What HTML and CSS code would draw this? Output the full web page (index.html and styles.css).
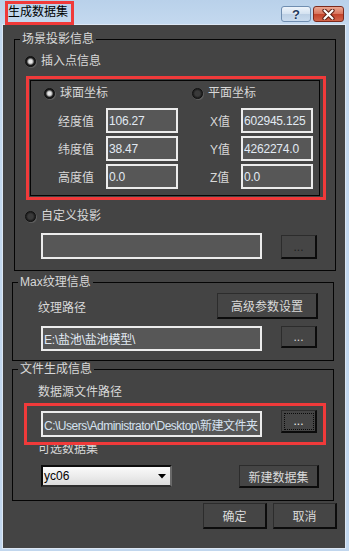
FILE: index.html
```html
<!DOCTYPE html>
<html lang="zh-CN">
<head>
    <meta charset="UTF-8">
    <title>生成数据集</title>
    <link rel="stylesheet" href="styles.css">
</head>
<body>
    <div class="window">
        <div class="titlebar">
            <span class="title">生成数据集</span>
            <span class="cap-btn help">?</span>
            <span class="cap-btn close">
                <svg width="15" height="11" viewBox="0 0 15 11">
                    <path d="M3.5 1.5 L11.5 9.5 M11.5 1.5 L3.5 9.5" stroke="#5b1d12" stroke-width="4.2" stroke-linecap="round"/>
                    <path d="M3.5 1.5 L11.5 9.5 M11.5 1.5 L3.5 9.5" stroke="#fff" stroke-width="2.2" stroke-linecap="round"/>
                </svg>
            </span>
            <div class="mark mark-title"></div>
        </div>

        <div class="client">
            <fieldset class="group g-scene">
                <legend>场景投影信息</legend>
                <div class="radio-row r-insert"><span class="radio on"></span>插入点信息</div>

                <div class="inner">
                    <div class="inner-radios">
                        <div class="radio-row"><span class="radio on"></span>球面坐标</div>
                        <div class="radio-row"><span class="radio"></span>平面坐标</div>
                    </div>
                    <div class="coords">
                        <span class="lbl">经度值</span>
                        <input class="field" type="text" value="106.27">
                        <span></span>
                        <span class="lbl">X值</span>
                        <input class="field" type="text" value="602945.125">

                        <span class="lbl">纬度值</span>
                        <input class="field" type="text" value="38.47">
                        <span></span>
                        <span class="lbl">Y值</span>
                        <input class="field" type="text" value="4262274.0">

                        <span class="lbl">高度值</span>
                        <input class="field" type="text" value="0.0">
                        <span></span>
                        <span class="lbl">Z值</span>
                        <input class="field" type="text" value="0.0">
                    </div>
                    <div class="mark mark-inner"></div>
                </div>

                <div class="radio-row r-custom"><span class="radio"></span>自定义投影</div>
                <div class="path-row p-proj">
                    <input class="field wide" type="text" value="">
                    <button class="btn dots off">...</button>
                </div>
            </fieldset>

            <fieldset class="group g-tex">
                <legend>Max纹理信息</legend>
                <div class="tex-row">
                    <span>纹理路径</span>
                    <button class="btn adv">高级参数设置</button>
                </div>
                <div class="path-row p-tex">
                    <input class="field wide short" type="text" value="E:\盐池\盐池模型\">
                    <button class="btn dots">...</button>
                </div>
            </fieldset>

            <fieldset class="group g-file">
                <legend>文件生成信息</legend>
                <div class="sub-lbl l-src">数据源文件路径</div>
                <div class="path-row p-file">
                    <input class="field wide path" type="text" value="C:\Users\Administrator\Desktop\新建文件夹">
                    <button class="btn dots focus">...</button>
                    <div class="mark mark-file"></div>
                </div>
                <div class="sub-lbl l-opt">可选数据集</div>
                <div class="ds-row">
                    <div class="combo">
                        <span>yc06</span>
                        <svg width="8" height="5" viewBox="0 0 8 5"><path d="M0 0 H8 L4 4.5 Z" fill="#000"/></svg>
                    </div>
                    <button class="btn new-ds">新建数据集</button>
                </div>
            </fieldset>

            <div class="footer">
                <button class="btn ok">确定</button>
                <button class="btn ok">取消</button>
            </div>
        </div>
    </div>
</body>
</html>
```

FILE: styles.css
```css
*{
    box-sizing: border-box;
}
body{
    margin: 0;
    font-family: "Liberation Sans", "Noto Sans CJK SC", sans-serif;
    font-size: 12px;
    background: #c0d6ee;
}
.window{
    width: 349px;
    height: 551px;
    display: flex;
    flex-direction: column;
    padding: 0 4px 3px 3px;
    background: linear-gradient(#b9d1ea, #c4d9ef 25px, #c2d7ee);
}

/* title bar */
.titlebar{
    position: relative;
    height: 25px;
    display: flex;
    align-items: flex-start;
    padding-left: 5px;
}
.title{
    color: #000;
    line-height: 16px;
    margin-top: 4px;
}
.cap-btn{
    height: 16px;
    margin-top: 6px;
    border-radius: 3px;
    display: flex;
    align-items: center;
    justify-content: center;
}
.help{
    width: 30px;
    margin-left: auto;
    border: 1px solid #6f8db0;
    background: linear-gradient(#eef4fb, #d3e1f0 50%, #bccfe4 51%, #c9dbee);
    color: #1f3a5c;
    font-weight: bold;
    font-size: 13px;
    text-shadow: 0 0 2px #fff;
}
.close{
    width: 31px;
    margin-left: 2px;
    margin-right: 1px;
    border: 1px solid #7c2a1d;
    background: linear-gradient(#eba791, #d8735c 50%, #c2422a 51%, #d2654b);
}

/* red markers drawn over the dialog */
.mark{
    position: absolute;
    border: 3px solid #f03a3a;
    pointer-events: none;
}
.mark-title{
    left: 2px;
    top: 1px;
    width: 69px;
    height: 24px;
}
.mark-inner{
    left: -5px;
    top: -5px;
    right: -7px;
    bottom: -5px;
}
.mark-file{
    left: -17px;
    top: -7px;
    width: 302px;
    height: 42px;
}

/* client area */
.client{
    flex: 1;
    background: #444444;
    padding: 6px 0 0 9px;
    color: #d8d8d8;
    box-shadow: 0 0 0 1px #dde8f5;
}
.group{
    margin: 0;
    padding: 0;
    min-width: 0;
    width: 322px;
    border: 1px solid #050505;
}
.group legend{
    margin-left: 5px;
    padding: 0 2px;
    line-height: 16px;
    color: #d8d8d8;
}
.g-scene{
    margin-left: 2px;
}
.g-tex{
    margin-top: 3px;
}

.radio-row{
    display: flex;
    align-items: center;
    gap: 5px;
    height: 16px;
    line-height: 16px;
}
.radio{
    width: 11px;
    height: 11px;
    border-radius: 50%;
    border: 1px solid #101010;
    background: radial-gradient(circle, #3a3a3a 0 2.5px, #232323 4px);
    box-shadow: 1px 1px 0 #5c5c5c;
}
.radio.on{
    background: radial-gradient(circle, #e6e6e6 0 1.5px, #a8a8a8 2.5px, #1a1a1a 3.8px);
}
.r-insert{
    margin: 6px 0 0 10px;
}
.r-custom{
    margin: 12px 0 0 10px;
}

.inner{
    position: relative;
    width: 290px;
    height: 116px;
    margin: 11px 0 0 15px;
    border: 1px solid #050505;
}
.inner-radios{
    display: grid;
    grid-template-columns: 148px auto;
    margin-top: 4px;
    padding-left: 13px;
}
.coords{
    display: grid;
    grid-template-columns: 48px 72px 32px 31px 72px;
    grid-auto-rows: 25px;
    row-gap: 3px;
    align-items: center;
    margin-top: 7px;
    padding-left: 27px;
}
.field{
    height: 25px;
    width: 72px;
    margin: 0;
    padding: 0 1px;
    border: 2px solid #ececec;
    background: #575757;
    color: #e2eaf3;
    font-family: "Liberation Sans", "Noto Sans CJK SC", sans-serif;
    font-size: 12px;
    letter-spacing: -0.2px;
    outline: none;
}
.field.wide{
    width: 221px;
    height: 26px;
}
.field.short{
    height: 25px;
}
.field.path{
    letter-spacing: -0.5px;
    color: #d6e2f0;
    margin-top: 1px;
}

.path-row{
    display: flex;
    gap: 19px;
}
.p-proj{
    align-items: flex-end;
    margin: 9px 0 11px 26px;
}
.p-tex{
    align-items: flex-start;
    margin: 7px 0 9px 28px;
}
.p-file{
    position: relative;
    align-items: flex-start;
    margin: 10px 0 0 28px;
}

.btn{
    margin: 0;
    padding: 0;
    background: #454545;
    color: #dadada;
    font-family: "Liberation Sans", "Noto Sans CJK SC", sans-serif;
    font-size: 12px;
    border: 1px solid #2c2c2c;
    border-right: 2px solid #0c0c0c;
    border-bottom: 2px solid #0c0c0c;
}
.dots{
    width: 36px;
    height: 24px;
}
.dots.off{
    color: #1e1e1e;
}
.p-tex .dots{
    height: 22px;
}
.p-file .dots{
    height: 23px;
    color: #f0f0f0;
    outline: 1px dotted #0a0a0a;
    outline-offset: -4px;
}
.tex-row{
    display: flex;
    align-items: center;
    justify-content: space-between;
    height: 26px;
    margin: 3px 15px 0 25px;
}
.adv{
    width: 101px;
    height: 26px;
}

.sub-lbl{
    line-height: 16px;
    margin-left: 25px;
}
.l-src{
    margin-top: 7px;
}
.l-opt{
    margin-top: 4px;
}
.ds-row{
    display: flex;
    justify-content: space-between;
    align-items: flex-start;
    margin: 8px 14px 12px 28px;
}
.combo{
    width: 131px;
    height: 22px;
    display: flex;
    align-items: center;
    justify-content: space-between;
    padding: 0 4px 0 1px;
    border: 2px solid;
    border-color: #0c0c0c #6a6a6a #2e2e2e #0c0c0c;
    background: linear-gradient(#fafafa, #ececec 50%, #dddddd);
    color: #000;
}
.new-ds{
    width: 80px;
    height: 23px;
}

.footer{
    display: flex;
    justify-content: flex-end;
    gap: 6px;
    margin: 2px 8px 0 0;
}
.ok{
    width: 64px;
    height: 26px;
}
```
